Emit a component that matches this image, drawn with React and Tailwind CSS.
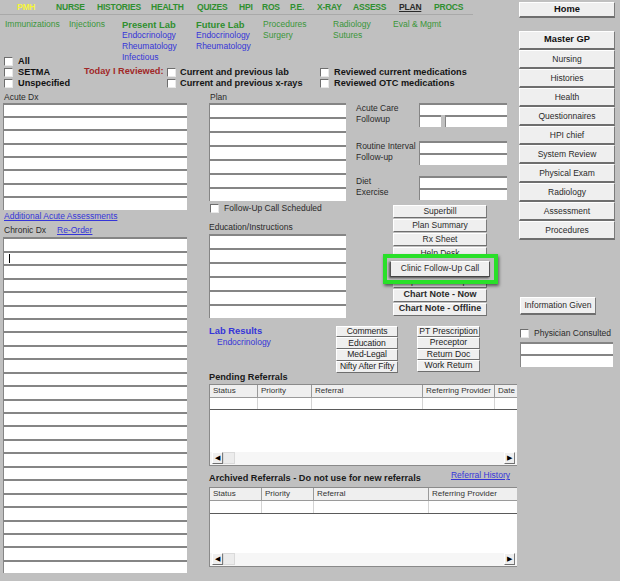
const NAV = [
  { label: 'PMH', w: 'w-[39px]', cls: 'text-[#f5f53a]' },
  { label: 'NURSE', w: 'w-[41px]' },
  { label: 'HISTORIES', w: 'w-[54px]' },
  { label: 'HEALTH', w: 'w-[46px]' },
  { label: 'QUIZES', w: 'w-[42px]' },
  { label: 'HPI', w: 'w-[23px]' },
  { label: 'ROS', w: 'w-[28px]' },
  { label: 'P.E.', w: 'w-[27px]' },
  { label: 'X-RAY', w: 'w-[36px]' },
  { label: 'ASSESS', w: 'w-[46px]' },
  { label: 'PLAN', w: 'w-[35px]', cls: 'underline' },
  { label: 'PROCS', w: 'w-[40px]' },
]

const SIDE = [
  'Nursing',
  'Histories',
  'Health',
  'Questionnaires',
  'HPI chief',
  'System Review',
  'Physical Exam',
  'Radiology',
  'Assessment',
  'Procedures',
]

const PLAN_BUTTONS = [
  { label: 'Superbill' },
  { label: 'Plan Summary' },
  { label: 'Rx Sheet' },
  { label: 'Help Desk' },
  { label: 'Clinic Follow-Up Call' },
  { label: 'Hospital Follow-Up Call' },
  { label: 'Chart Note - Now', bold: true },
  { label: 'Chart Note - Offline', bold: true },
]

const green = 'text-[#3a963a]'
const blue = 'text-[#3535d8]'

function Box() {
  return (
    <span className="block w-[9px] h-[9px] shrink-0 bg-white border border-[#e8e8e8] border-t-[#6e6e6e] border-l-[#6e6e6e]" />
  )
}

function Check({ label, cls = '' }) {
  return (
    <div className="flex items-center h-[11px]">
      <Box />
      <span className={`ml-[5px] whitespace-nowrap ${cls}`}>{label}</span>
    </div>
  )
}

// sunken text field rows, like the old VB forms
function Field({ h = 'h-[12px]', w = 'w-full' }) {
  return <div className={`${h} ${w} bg-white border-t-2 border-l border-[#858585]`} />
}

function Btn({ children, cls = '' }) {
  return (
    <div
      className={`flex items-center justify-center whitespace-nowrap bg-[#efefef] border border-t-white border-l-white border-r-[#7b7b7b] border-b-[#6e6e6e] ${cls}`}
    >
      {children}
    </div>
  )
}

function TopNav() {
  return (
    <div className="h-[15px] w-[473px] flex items-center pl-[17px] border-b border-[#a9a9a9] text-[8.5px] font-bold tracking-[-0.2px]">
      {NAV.map((n) => (
        <span key={n.label} className={`${n.w} shrink-0 ${n.cls || 'text-[#2f8f2f]'}`}>
          {n.label}
        </span>
      ))}
    </div>
  )
}

function SubLinks() {
  return (
    <div className="h-[36px] mt-[3.5px] flex pl-[5px] text-[8.5px] leading-[11px]">
      <div className={`w-[64px] ${green}`}>Immunizations</div>
      <div className={`w-[53px] ${green}`}>Injections</div>
      <div className="w-[74px]">
        <div className="font-bold text-[9.4px] text-[#2f8f2f]">Present Lab</div>
        <div className={blue}>Endocrinology</div>
        <div className={blue}>Rheumatology</div>
        <div className={blue}>Infectious</div>
      </div>
      <div className="w-[67px]">
        <div className="font-bold text-[9.4px] text-[#2f8f2f]">Future Lab</div>
        <div className={blue}>Endocrinology</div>
        <div className={blue}>Rheumatology</div>
      </div>
      <div className={`w-[70px] ${green}`}>
        <div>Procedures</div>
        <div>Surgery</div>
      </div>
      <div className={`w-[60px] ${green}`}>
        <div>Radiology</div>
        <div>Sutures</div>
      </div>
      <div className={green}>Eval &amp; Mgmt</div>
    </div>
  )
}

function ReviewRow() {
  return (
    <div className="h-[36px] flex items-start text-[9.2px] font-bold leading-[11px]">
      <div className="w-[84px] pl-[4px] pt-[1.5px] text-[#111]">
        <Check label="All" />
        <Check label="SETMA" />
        <Check label="Unspecified" />
      </div>
      <div className="w-[83px] pt-[11.5px] text-[#a02828] whitespace-nowrap">Today I Reviewed:</div>
      <div className="w-[153px] pt-[12px] text-[#151515]">
        <Check label="Current and previous lab" cls="!ml-[4px]" />
        <Check label="Current and previous x-rays" cls="!ml-[4px]" />
      </div>
      <div className="pt-[12px] text-[#151515]">
        <Check label="Reviewed current medications" />
        <Check label="Reviewed OTC medications" />
      </div>
    </div>
  )
}

function DxColumn() {
  return (
    <div className="ml-[3px] w-[184px] shrink-0 text-[8.5px]">
      <div className="h-[12px] leading-[12px] pl-[1px]">Acute Dx</div>
      {Array.from({ length: 8 }).map((_, i) => (
        <Field key={i} h="h-[13.4px]" />
      ))}
      <div className="h-[12px] leading-[12px] pl-[1px]">
        <span className={`${blue} underline`}>Additional Acute Assessments</span>
      </div>
      <div className="h-[15.7px] flex items-center pt-[2px] pl-[1px]">
        <span className="w-[53px]">Chronic Dx</span>
        <span className={`${blue} underline`}>Re-Order</span>
      </div>
      {Array.from({ length: 25 }).map((_, i) => (
        <div key={i} className="relative">
          <Field h="h-[13.45px]" />
          {i === 1 && <span className="absolute left-[6px] top-[3px] w-px h-[9px] bg-black" />}
        </div>
      ))}
    </div>
  )
}

function PlanColumn() {
  return (
    <div className="w-[137px] shrink-0">
      <div className="h-[12px] leading-[12px] pl-[1px]">Plan</div>
      {Array.from({ length: 7 }).map((_, i) => (
        <Field key={i} h="h-[14.05px]" />
      ))}
      <div className="h-[15px] flex items-center pl-[1px]">
        <Box />
        <span className="ml-[5px]">Follow-Up Call Scheduled</span>
      </div>
      <div className="h-[18.6px] flex items-center pt-[4px]">Education/Instructions</div>
      {Array.from({ length: 6 }).map((_, i) => (
        <Field key={i} h="h-[14px]" />
      ))}
    </div>
  )
}

function LabeledFields({ labels, children, cls = '' }) {
  return (
    <div className={`flex ${cls}`}>
      <div className="w-[73px] shrink-0 pl-[10px] leading-[11.5px] whitespace-nowrap">
        {labels.map((l) => (
          <div key={l}>{l}</div>
        ))}
      </div>
      <div className="w-[88px]">{children}</div>
    </div>
  )
}

function PlanSide() {
  return (
    <div className="w-[171px] pt-[12px]">
      <LabeledFields labels={['Acute Care', 'Followup']}>
        <Field />
        <div className="flex gap-[4px]">
          <Field w="w-[22px]" />
          <Field w="w-[62px]" />
        </div>
      </LabeledFields>
      <LabeledFields labels={['Routine Interval', 'Follow-up']} cls="mt-[14px]">
        <Field />
        <Field />
      </LabeledFields>
      <LabeledFields labels={['Diet', 'Exercise']} cls="mt-[11px]">
        <Field />
        <Field />
      </LabeledFields>

      <div className="relative ml-[47px] w-[94px] mt-[5px] flex flex-col gap-[1px]">
        {PLAN_BUTTONS.map((b) => (
          <Btn key={b.label} cls={`h-[13px] ${b.bold ? 'font-bold text-[9px]' : ''}`}>
            {b.label}
          </Btn>
        ))}
        {/* green highlight round the clinic call button */}
        <div className="absolute left-[-10px] top-[49px] w-[115px] h-[30px] border-[4px] border-[#29e029] bg-[#bdbdbd] shadow-[1px_2px_3px_rgba(0,0,0,0.55)]">
          <div className="ml-[3px] mt-[3px] w-[100px] h-[16px] flex items-center justify-center bg-[#efefef] border border-t-white border-l-[#555] border-r-[#555] border-b-[#444] shadow-[-1px_1px_2px_rgba(0,0,0,0.6)]">
            Clinic Follow-Up Call
          </div>
        </div>
      </div>
    </div>
  )
}

function Scrollbar() {
  return (
    <div className="h-[13px] flex items-center px-[2px] bg-[#f6f6f6]">
      <Btn cls="w-[11px] h-[12px] text-[7px] text-black">◀</Btn>
      <div className="w-[12px] h-[12px] bg-[#ececec] border border-[#dadada]" />
      <div className="flex-1" />
      <Btn cls="w-[11px] h-[12px] text-[7px] text-black">▶</Btn>
    </div>
  )
}

function RefTable({ cols, h, rowH }) {
  return (
    <div className={`${h} w-[308px] flex flex-col bg-white border border-[#8a8a8a] border-r-0 overflow-hidden`}>
      <div className="flex h-[13px] bg-[#efefef] border-b border-[#9a9a9a] text-[8px] text-[#333]">
        {cols.map((c) => (
          <div key={c.label} className={`${c.w} shrink-0 pl-[3px] leading-[12px] whitespace-nowrap overflow-hidden border-r border-[#9a9a9a]`}>
            {c.label}
          </div>
        ))}
      </div>
      <div className={`flex ${rowH} border-b border-[#5a5a5a]`}>
        {cols.map((c) => (
          <div key={c.label} className={`${c.w} shrink-0 border-r border-[#d4d4d4]`} />
        ))}
      </div>
      <div className="flex-1" />
      <Scrollbar />
    </div>
  )
}

function Sidebar() {
  return (
    <aside className="ml-[2px] w-[96px] shrink-0 pt-[2px] text-[8.5px] text-[#2a2a2a]">
      <Btn cls="h-[16px] font-bold text-[9.3px] text-[#111] border-b-2">Home</Btn>
      <div className="mt-[13px]">
        <Btn cls="h-[19px] font-bold text-[9.3px] text-[#111] border-b-2">Master GP</Btn>
        {SIDE.map((s) => (
          <Btn key={s} cls="h-[19px] border-b-2">
            {s}
          </Btn>
        ))}
      </div>
      <Btn cls="mt-[57px] ml-[1px] w-[76px] h-[18px] border-b-2">Information Given</Btn>
      <div className="mt-[13px] ml-[1px] h-[11px] flex items-center">
        <Box />
        <span className="ml-[5px] whitespace-nowrap">Physician Consulted</span>
      </div>
      <div className="ml-[1px] mt-[3px] w-[93px]">
        <Field h="h-[12px]" />
        <Field h="h-[13px]" />
      </div>
    </aside>
  )
}

export default function App() {
  return (
    <div className="w-[620px] h-[581px] overflow-hidden flex bg-[#c0c0c0] font-['Liberation_Sans',Arial,sans-serif] text-[8.5px] text-[#2a2a2a]">
      <main className="w-[517px] shrink-0">
        <TopNav />
        <SubLinks />
        <ReviewRow />
        <div className="flex">
          <DxColumn />
          <div className="ml-[22px] w-[308px] shrink-0">
            <div className="flex h-[228px]">
              <PlanColumn />
              <PlanSide />
            </div>

            <div className="flex h-[52px]">
              <div className="w-[127px] pt-[6.5px] leading-[11.5px]">
                <div className={`font-bold text-[9.4px] ${blue}`}>Lab Results</div>
                <div className={`ml-[8px] ${blue}`}>Endocrinology</div>
              </div>
              <div className="w-[62px] pt-[7px]">
                {['Comments', 'Education', 'Med-Legal', 'Nifty After Fifty'].map((t) => (
                  <Btn key={t} cls="h-[11.75px] text-[8.6px] tracking-[-0.1px] text-[#222]">
                    {t}
                  </Btn>
                ))}
              </div>
              <div className="ml-[19px] w-[63px] pt-[7px]">
                {['PT Prescription', 'Preceptor', 'Return Doc', 'Work Return'].map((t) => (
                  <Btn key={t} cls="h-[11.5px] text-[8.6px] text-[#222]">
                    {t}
                  </Btn>
                ))}
              </div>
            </div>

            <div className="h-[13px] leading-[13px] font-bold text-[9.2px] text-[#1a1a1a]">Pending Referrals</div>
            <RefTable
              h="h-[82px]"
              rowH="h-[12px]"
              cols={[
                { label: 'Status', w: 'w-[48px]' },
                { label: 'Priority', w: 'w-[54px]' },
                { label: 'Referral', w: 'w-[111px]' },
                { label: 'Referring Provider', w: 'w-[72px]' },
                { label: 'Date', w: 'w-[40px]' },
              ]}
            />

            <div className="h-[21px] flex items-start">
              <div className="pt-[7.5px] leading-[11px] font-bold text-[9.2px] text-[#1a1a1a] whitespace-nowrap">
                Archived Referrals - Do not use for new referrals
              </div>
              <div className={`ml-auto mr-[7px] pt-[4.5px] leading-[11px] underline ${blue}`}>Referral History</div>
            </div>
            <RefTable
              h="h-[80px]"
              rowH="h-[13px]"
              cols={[
                { label: 'Status', w: 'w-[52px]' },
                { label: 'Priority', w: 'w-[52px]' },
                { label: 'Referral', w: 'w-[115px]' },
                { label: 'Referring Provider', w: 'w-[100px]' },
              ]}
            />
          </div>
        </div>
      </main>
      <Sidebar />
    </div>
  )
}
